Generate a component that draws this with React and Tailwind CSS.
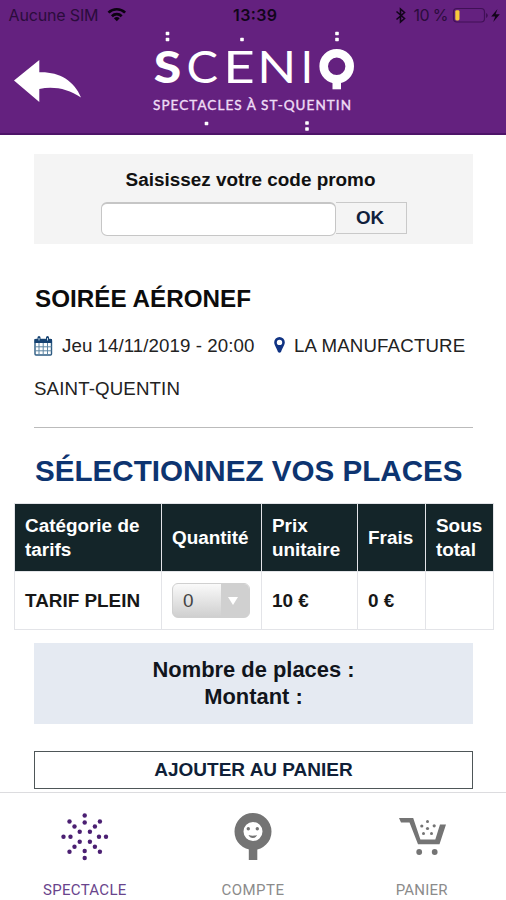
import React from "react";

function Status() {
  return (
    <div className="grid h-7 grid-cols-3 items-center font-['Inter',sans-serif] text-[16px] leading-7 text-[#180820]">
      <div className="flex items-center pl-2">
        <svg width="122" height="26" viewBox="8 0 122 26">
          <text x="8.5" y="20" fontSize="16" textLength="90" fill="#2b0c3c">Aucune SIM</text>
          <g fill="none" stroke="#0b0310" strokeWidth="2.7">
            <path d="M108.5 11.6a12 12 0 0 1 16.6 0" />
            <path d="M111.9 15.2a7 7 0 0 1 9.8 0" />
          </g>
          <path d="M113.9 17.3a4.2 4.2 0 0 1 5.8 0l-2.9 3z" fill="#0b0310" />
        </svg>
      </div>
      <div className="flex justify-center pl-1">
        <svg width="48" height="26" viewBox="231 0 48 26">
          <text x="233" y="20" fontSize="16" fontWeight="600" textLength="44" fill="#12051a">13:39</text>
        </svg>
      </div>
      <div className="flex justify-end">
        <svg width="116" height="26" viewBox="390 0 116 26">
          <path d="M396.5 10.5l8 7-4 3.500v-13l4 3.500-8 7" fill="none" stroke="#12051a" strokeWidth="1.6" />
          <text x="413.5" y="20" fontSize="16" textLength="35" fill="#2b0c3c">10 %</text>
          <rect x="453.5" y="7.5" width="31" height="13.5" rx="3.5" fill="none" stroke="#401056" strokeWidth="1.2" />
          <rect x="455.3" y="9.2" width="4.2" height="10.2" rx="1.4" fill="#f7c93b" />
          <path d="M486 12v5q1.8-.8 1.8-2.500t-1.800-2.500z" fill="#401056" />
          <path d="M497.500 8l-6.300 7.500h4l-2 5.500 6.600-7.700h-4.200z" fill="#12051a" />
        </svg>
      </div>
    </div>
  );
}

const logoDots = [
  [167.5, 33.5], [167.5, 39.5], [242, 39.5], [337, 33.5], [337, 39.5],
  [206.5, 123.5], [307, 123], [307, 129],
];

function Header() {
  return (
    <header className="h-[135px] border-b-2 border-[#4d1468] bg-[#64217f]">
      <Status />
      <div className="flex h-[105px] pl-3">
        <svg className="mt-7 shrink-0" width="72" height="50" viewBox="12 56 72 50" fill="#fff">
          <path d="M14 80.500L39.300 60v12.300C58 71.500 74 80 81 97.500 68 89 54 86 39.300 89v13z" />
        </svg>
        <svg className="ml-[66px] shrink-0" width="210" height="105" viewBox="150 28 210 105" fill="#fff">
          {logoDots.map(([x, y]) => (
            <rect key={x + "-" + y} x={x - 1.8} y={y - 1.7} width="3.600" height="3.400" rx=".6" />
          ))}
          <g className="font-['Lato',sans-serif]" fontSize="43.500">
            <text x="153.800" y="83" fontWeight="900" fontSize="44.500" textLength="27.500" lengthAdjust="spacingAndGlyphs">S</text>
            <text x="186.400" y="83" textLength="31.500" lengthAdjust="spacingAndGlyphs">C</text>
            <text x="223.300" y="83" textLength="31.500" lengthAdjust="spacingAndGlyphs">E</text>
            <text x="257.300" y="83" textLength="39" lengthAdjust="spacingAndGlyphs">N</text>
            <text x="300.700" y="83">I</text>
          </g>
          <circle cx="336.700" cy="66.300" r="13" fill="none" stroke="#fff" strokeWidth="8.600" />
          <rect x="332.500" y="80" width="8.500" height="9.300" />
          <text x="153" y="109.500" className="font-['Lato',sans-serif]" fontSize="13.500" textLength="198" fill="#eedcf5" stroke="#eedcf5" strokeWidth=".4">
            SPECTACLES À ST-QUENTIN
          </text>
        </svg>
      </div>
    </header>
  );
}

function Promo() {
  return (
    <section className="mr-[33px] ml-[34px] mt-[19px] h-[90px] bg-[#f4f4f4] pt-[14px]">
      <p className="pr-1.5 text-center text-[18.900px] leading-6 font-bold text-[#111]">Saisissez votre code promo</p>
      <div className="mt-[10px] flex pl-[67px]">
        <div className="h-[34px] w-[235px] rounded-[6px] border border-t-2 border-[#c6c6c6] bg-white" />
        <div className="flex h-8 w-[71px] items-center justify-center border border-l-0 border-[#c9c9c9] pr-0.5 text-[18.800px] font-bold text-[#10203c]">OK</div>
      </div>
    </section>
  );
}

function CalendarIcon() {
  return (
    <svg width="19" height="20" viewBox="0 0 19 20" fill="none" className="mt-[12px] shrink-0">
      <rect x="1" y="3.500" width="16.500" height="15.500" rx="1" fill="#fff" stroke="#2d5b82" strokeWidth="1.400" />
      <path d="M.5 3h17.500v4H.5z" fill="#174372" />
      <path d="M5 1.500v3M13.500 1.500v3" stroke="#174372" strokeWidth="3" strokeLinecap="round" />
      <path d="M5 2v2.500M13.500 2v2.500" stroke="#c6dce8" strokeWidth="1" />
      <path d="M5 7v12M9.200 7v12M13.500 7v12M1 10.800h16.500M1 14.800h16.500" stroke="#5f86a3" strokeWidth="1" />
    </svg>
  );
}

function Details() {
  return (
    <section className="mr-[33px] ml-[34px] mt-[41px] border-b border-[#bbb] text-[18.700px] text-[#222]">
      <h1 className="pl-px text-[24.200px] leading-7 font-bold tracking-[0.040px] text-[#0c0c0c]">SOIRÉE AÉRONEF</h1>
      <div className="mt-[11px] flex h-[43px] leading-[43px] whitespace-nowrap">
        <CalendarIcon />
        <span className="ml-2 w-[212px] pl-px tracking-[0.07px]">Jeu 14/11/2019 - 20:00</span>
        <svg width="11" height="16" viewBox="0 0 11 16" className="mt-[13px] ml-px shrink-0">
          <path fillRule="evenodd" fill="#103383" d="M5.500 0A5.300 5.300 0 0 0 .2 5.300C.2 8 2.200 10 4 15q1.500 1.500 3 0c1.800-5 3.800-7 3.800-9.700A5.300 5.300 0 0 0 5.500 0zm0 2.700a2.700 2.700 0 1 1 0 5.400 2.700 2.700 0 0 1 0-5.400z" />
        </svg>
        <span className="ml-[9px] tracking-[0.150px]">LA MANUFACTURE</span>
      </div>
      <p className="h-[60px] leading-[43px] tracking-[0.130px]">SAINT-QUENTIN</p>
    </section>
  );
}

const cell = "border border-[#e3e4e8] pl-[10px] text-left";

function Tickets() {
  return (
    <table className="mx-[14px] mt-[14px] w-[479px] table-fixed border-collapse text-[18.900px] leading-[23.500px] font-bold">
      <colgroup>
        <col className="w-[147px]" />
        <col className="w-[100px]" />
        <col className="w-[96px]" />
        <col className="w-[68px]" />
        <col className="w-[68px]" />
      </colgroup>
      <thead>
        <tr className="h-[68px] bg-[#142529] text-white">
          <th className={cell}>Catégorie de tarifs</th>
          <th className={cell}>Quantité</th>
          <th className={cell}>Prix unitaire</th>
          <th className={cell}>Frais</th>
          <th className={cell}>Sous total</th>
        </tr>
      </thead>
      <tbody>
        <tr className="h-[58px] text-[#171717]">
          <td className={cell}>TARIF PLEIN</td>
          <td className={cell}>
            <div className="flex h-[35px] w-[78px] overflow-hidden rounded-[6px] border border-[#d0d0d0] bg-linear-to-b from-[#fafafa] to-[#cfcfcf] font-normal text-[#444]">
              <span className="flex w-12 items-center pl-[10px]">0</span>
              <span className="flex flex-1 items-center justify-center bg-[#d0d0d0] pr-1">
                <svg width="10" height="8" viewBox="0 0 10 8"><path d="M0 0h10L5 8z" fill="#fff" /></svg>
              </span>
            </div>
          </td>
          <td className={cell}>10 €</td>
          <td className={cell}>0 €</td>
          <td className={cell} />
        </tr>
      </tbody>
    </table>
  );
}

const burst = [
  [84.700, 815.500], [84.700, 822.500], [69.500, 821.500], [74.500, 826.500], [79.700, 831.700],
  [99.900, 821.500], [94.900, 826.500], [89.900, 831.700], [63.500, 836.700], [70.500, 836.700],
  [99, 836.700], [106, 836.700], [79.700, 841.700], [74.500, 846.700], [69.500, 851.700],
  [89.900, 841.700], [94.900, 846.700], [99.900, 851.700], [84.700, 851], [84.700, 858],
];

function TabBar() {
  return (
    <nav className="grid h-[108px] grid-cols-3 border-t border-[#dcdcdf] bg-white font-['Roboto',sans-serif] text-[15px] leading-5 text-[#8b8b8b]">
      <div className="flex flex-col items-center pt-[17px] pl-px">
        <svg width="50" height="52" viewBox="60 810 50 52" fill="#4b1f72">
          {burst.map(([x, y]) => <circle key={x + "-" + y} cx={x} cy={y} r="2.200" />)}
        </svg>
        <span className="mt-[18px] tracking-[0.300px] text-[#69448c]">SPECTACLE</span>
      </div>
      <div className="flex flex-col items-center pt-[17px]">
        <svg width="50" height="52" viewBox="228.500 810 50 52">
          <circle cx="253.500" cy="831.500" r="14" fill="#fff" stroke="#747474" strokeWidth="9" />
          <path d="M249.300 848h8.500v12h-8.500z" fill="#747474" />
          <circle cx="248.800" cy="828.700" r="1.700" fill="#747474" />
          <circle cx="257.800" cy="828.700" r="1.700" fill="#747474" />
          <path d="M249 835q4.300 1.500 8.600 0-1.300 3-4.300 3t-4.300-3z" fill="#747474" />
        </svg>
        <span className="mt-[18px] tracking-[0.500px]">COMPTE</span>
      </div>
      <div className="flex flex-col items-center pt-[17px]">
        <svg width="50" height="52" viewBox="397 810 50 52" fill="#747474">
          <path d="M399 818h14.200l7.200 21.500h14.900l4.700-15h6l-6.500 19.800H418L409.500 822.500H401z" />
          <circle cx="419.200" cy="852" r="2.900" />
          <circle cx="434.700" cy="852" r="2.900" />
          <circle cx="427.500" cy="821.500" r="1.500" />
          <circle cx="421.800" cy="826" r="1.600" />
          <circle cx="434.200" cy="825.800" r="1.600" />
          <circle cx="427.500" cy="828.500" r="1.600" />
          <circle cx="423.500" cy="833.500" r="1.500" />
          <circle cx="431.500" cy="833.500" r="1.500" />
        </svg>
        <span className="mt-[18px] tracking-[0.200px]">PANIER</span>
      </div>
    </nav>
  );
}

export default function App() {
  return (
    <div className="flex h-[900px] w-[506px] flex-col overflow-hidden bg-white font-['Liberation_Sans',Arial,sans-serif]">
      <Header />
      <main className="h-[657px]">
        <Promo />
        <Details />
        <h2 className="mt-[25px] ml-[35px] text-[29.600px] leading-9 font-bold whitespace-nowrap text-[#0d3470]">SÉLECTIONNEZ VOS PLACES</h2>
        <Tickets />
        <section className="mr-[33px] ml-[34px] mt-[13px] h-[81px] bg-[#e5eaf2] pt-[13px] text-center text-[21.900px] leading-[27px] font-bold text-[#11151c]">
          <p>Nombre de places :</p>
          <p>Montant :</p>
        </section>
        <button className="mx-[34px] mt-[27px] flex h-[38px] w-[439px] items-center justify-center border border-[#4e5658] text-[19px] font-bold text-[#101f38]">
          AJOUTER AU PANIER
        </button>
      </main>
      <TabBar />
    </div>
  );
}
